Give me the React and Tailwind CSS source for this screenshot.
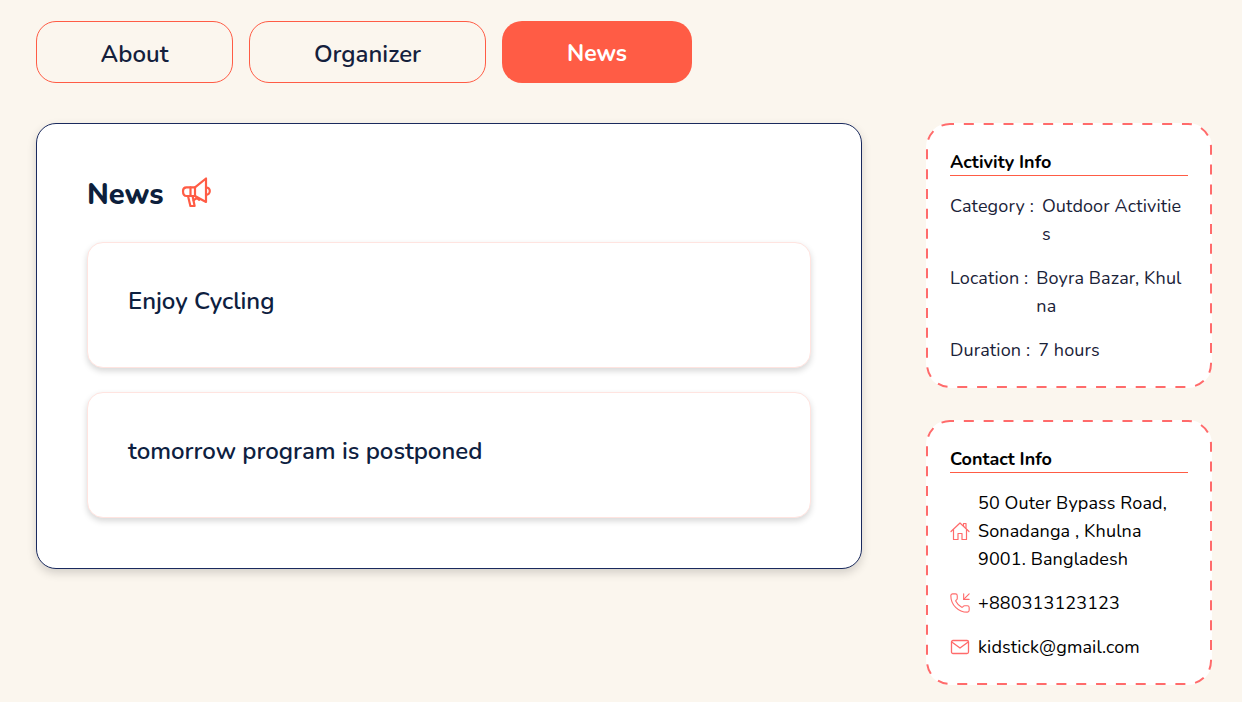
import React from "react";
import { PhoneIncoming } from "lucide-react";

function MegaphoneIcon() {
  return (
    <svg width="32" height="32" viewBox="0 0 32 32" fill="none" stroke="#ff5c45" strokeWidth="2.2" strokeLinejoin="round" strokeLinecap="round" className="-mt-1 shrink-0">
      <path d="M3 15c0-2.200 1.400-3.600 3.500-3.600h8.500v8.600H6.500C4.400 20 3 18 3 15z" />
      <path d="M15 11.400 26 2.500v23.500L15 20" />
      <path d="M26 11.500c2.300 0 3.800 1.600 3.800 3.600s-1.500 3.800-3.800 3.800" />
      <path d="M8 20l2.400 10h4.200L12.600 20" />
      <path d="M13.600 24.500l3-2.600 2.600 2" />
      <path d="M10.500 11.400V20" />
    </svg>
  );
}
function HomeIcon() {
  return (
    <svg width="20" height="20" viewBox="0 0 20 20" fill="none" stroke="currentColor" strokeWidth="1.200" strokeLinejoin="round" strokeLinecap="round">
      <path d="M1 10.500 10 2l9 8.500" />
      <path d="M3.500 8.500V18.500h4.500v-6h4v6h4.500V8.500" />
      <path d="M13.500 4.500V2.500h2.500v4.500" />
    </svg>
  );
}
function MailIcon() {
  return (
    <svg width="20" height="20" viewBox="0 0 20 20" fill="none" stroke="currentColor" strokeWidth="1.300" strokeLinejoin="round">
      <rect x="1.500" y="3.500" width="17" height="13" rx="1.500" />
      <path d="M1.800 5 10 11l8.200-6" />
    </svg>
  );
}
function Dashed() {
  return (
    <svg className="pointer-events-none absolute inset-0 h-full w-full" fill="none">
      <rect x="1" y="1" width="284" height="263" rx="23" stroke="#ff6b6b" strokeWidth="2" strokeDasharray="10 9.83" strokeDashoffset="6" />
    </svg>
  );
}
function Row({ label, value }) {
  return (
    <div className="flex gap-2 pr-1 text-lg leading-[28px] tracking-[0.12px] text-[#1a2238]">
      <span className="shrink-0">{label} :</span>
      <span className="break-all">{value}</span>
    </div>
  );
}
function Contact({ icon, children }) {
  return (
    <div className="flex items-center gap-2 text-lg leading-[28px] tracking-[0.12px] text-black">
      <span className="shrink-0 text-[#ff6b6b]">{icon}</span>
      <span>{children}</span>
    </div>
  );
}
function Card({ children }) {
  return (
    <div className="h-[126px] rounded-2xl border border-[#ffe4e0] bg-white px-10 pt-[39px] shadow-[0_3px_6px_rgba(0,0,0,0.16)]">
      <p className="text-2xl leading-[38px] font-semibold text-[#0d2040]">{children}</p>
    </div>
  );
}
export default function App() {
  return (
    <div className="min-h-[702px] bg-[#fbf6ee] pl-9 pr-[30px] pt-[21px] font-['Nunito','Noto_Sans','Open_Sans',sans-serif]">
      <div className="flex gap-4">
        <button className="h-[62px] w-[197px] rounded-[20px] border border-[#ff5c45] pt-1 text-2xl font-semibold text-[#14203c]">About</button>
        <button className="h-[62px] w-[237px] rounded-[20px] border border-[#ff5c45] pt-1 text-2xl font-semibold text-[#14203c]">Organizer</button>
        <button className="h-[62px] w-[190px] rounded-[20px] bg-[#ff5c45] pt-1 text-[23px] font-bold text-white">News</button>
      </div>
      <div className="mt-[40px] flex justify-between">
        <div className="h-[446px] w-[826px] rounded-[20px] border border-[#1a2a5e] bg-white px-[50px] pt-[50px] shadow-[0_4px_10px_rgba(0,0,0,0.16)]">
          <div className="flex items-center gap-[17px]">
            <h2 className="pt-[2px] text-[29px] leading-[38px] font-extrabold text-[#0d1f3c]">News</h2>
            <MegaphoneIcon />
          </div>
          <div className="mt-[28px] flex flex-col gap-6">
            <Card>Enjoy Cycling</Card>
            <Card>tomorrow program is postponed</Card>
          </div>
        </div>
        <div className="flex w-[286px] flex-col gap-[32px]">
          <div className="relative h-[265px] rounded-3xl bg-white px-6 pt-[27px]">
            <Dashed />
            <h3 className="border-b border-[#ff5c45] text-lg leading-[25px] font-bold text-black">Activity Info</h3>
            <div className="mt-4 flex flex-col gap-4">
              <Row label="Category" value="Outdoor Activities" />
              <Row label="Location" value="Boyra Bazar, Khulna" />
              <Row label="Duration" value="7 hours" />
            </div>
          </div>
          <div className="relative h-[265px] rounded-3xl bg-white px-6 pt-[27px]">
            <Dashed />
            <h3 className="border-b border-[#ff5c45] text-lg leading-[25px] font-bold text-black">Contact Info</h3>
            <div className="mt-4 flex flex-col gap-4">
              <Contact icon={<HomeIcon />}>50 Outer Bypass Road, Sonadanga , Khulna 9001. Bangladesh</Contact>
              <Contact icon={<PhoneIncoming size={22} strokeWidth={1.200} className="-mx-[1px]" />}>+880313123123</Contact>
              <Contact icon={<MailIcon />}>kidstick@gmail.com</Contact>
            </div>
          </div>
        </div>
      </div>
    </div>
  );
}
